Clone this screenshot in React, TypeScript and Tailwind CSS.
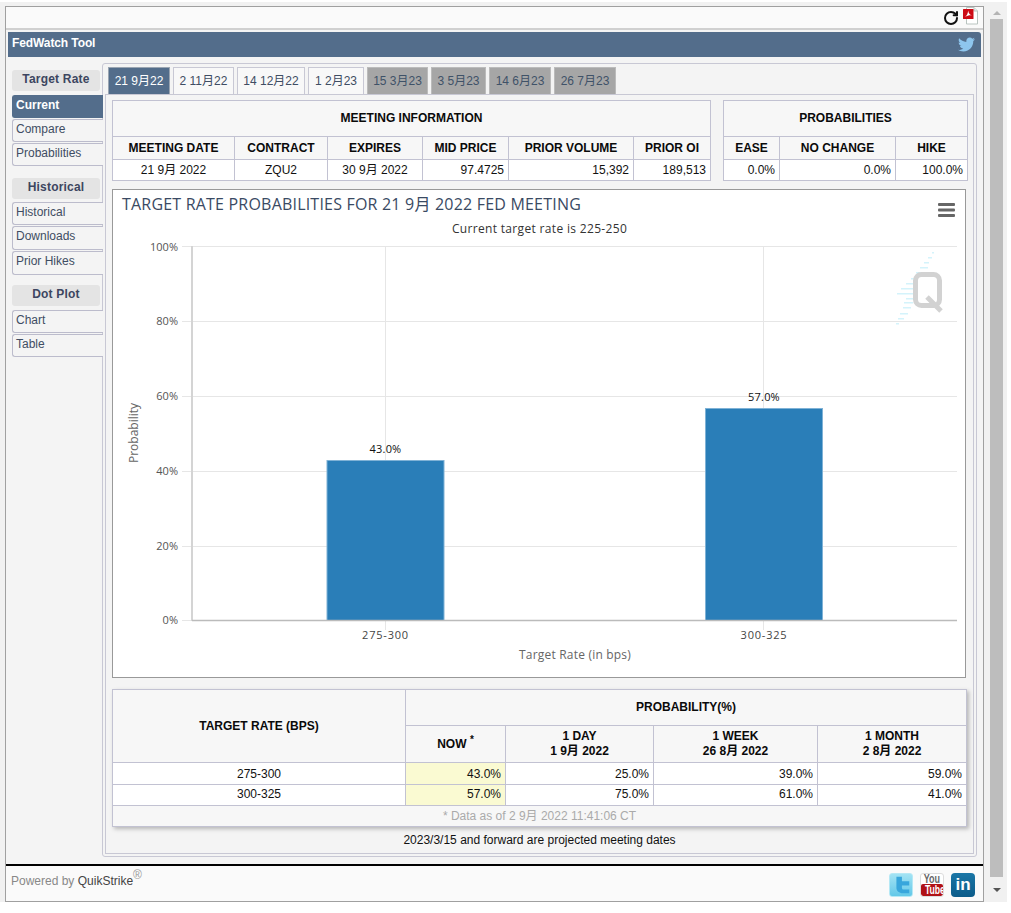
import { RotateCw } from 'lucide-react';
import { FaTwitter } from 'react-icons/fa';
import type { ReactNode } from 'react';

const tabs = [
  { label: '21 9月22', kind: 'active', width: 'w-[62px]' },
  { label: '2 11月22', kind: 'normal', width: 'w-[61px]' },
  { label: '14 12月22', kind: 'normal', width: 'w-[68px]' },
  { label: '1 2月23', kind: 'normal', width: 'w-[56px]' },
  { label: '15 3月23', kind: 'off', width: 'w-[61px]' },
  { label: '3 5月23', kind: 'off', width: 'w-[55px]' },
  { label: '14 6月23', kind: 'off', width: 'w-[62px]' },
  { label: '26 7月23', kind: 'off', width: 'w-[62px]' },
];

const th = 'border border-[#c2c2d2] bg-[#f7f7f7] font-bold text-[12px] text-[#0a0a0a] text-center p-0';
const tdC = 'border border-[#c2c2d2] bg-white text-[12px] text-[#111] text-center p-0';
const tdR = 'border border-[#c2c2d2] bg-white text-[12px] text-[#111] text-right pr-[4px] p-0';

function SideHead({ children, className }: { children: ReactNode; className?: string }) {
  return (
    <div className={`w-[88px] h-[21px] rounded-[3px] bg-[#e4e4e4] text-center text-[12px] font-bold leading-[19px] tracking-[0.2px] text-[#3d4660] ${className ?? ''}`}>
      {children}
    </div>
  );
}

function SideItem({ children, active, tall }: { children: ReactNode; active?: boolean; tall?: boolean }) {
  return (
    <div
      className={`relative z-10 w-[91px] ${tall ? 'h-[24px]' : 'h-[23px]'} rounded-l-[3px] border border-r-0 pl-[3px] text-[12px] leading-[18px] ${
        active ? 'border-[#536d8b] bg-[#536d8b] font-bold text-white' : 'border-[#bcbccc] bg-[#f4f4f4] text-[#3f4d63]'
      }`}
    >
      {children}
    </div>
  );
}

function Sidebar() {
  return (
    <div className="w-[90px] shrink-0 pt-[13px] ml-[6px]">
      <SideHead>Target Rate</SideHead>
      <div className="mt-[4px] flex flex-col gap-px">
        <SideItem active>Current</SideItem>
        <SideItem>Compare</SideItem>
        <SideItem>Probabilities</SideItem>
      </div>
      <SideHead className="mt-[12px]">Historical</SideHead>
      <div className="mt-[3px] flex flex-col gap-px">
        <SideItem>Historical</SideItem>
        <SideItem tall>Downloads</SideItem>
        <SideItem tall>Prior Hikes</SideItem>
      </div>
      <SideHead className="mt-[10px]">Dot Plot</SideHead>
      <div className="mt-[4px] flex flex-col gap-px">
        <SideItem>Chart</SideItem>
        <SideItem>Table</SideItem>
      </div>
    </div>
  );
}

function MeetingTables() {
  return (
    <div className="flex gap-[12px]">
      <table className="w-[598px] table-fixed border-collapse">
        <colgroup>
          <col className="w-[122px]" />
          <col className="w-[93px]" />
          <col className="w-[95px]" />
          <col className="w-[86px]" />
          <col className="w-[125px]" />
          <col className="w-[77px]" />
        </colgroup>
        <tbody>
          <tr className="h-[36px]">
            <th colSpan={6} className={`${th} pb-[2px]`}>MEETING INFORMATION</th>
          </tr>
          <tr className="h-[23px]">
            <th className={th}>MEETING DATE</th>
            <th className={th}>CONTRACT</th>
            <th className={th}>EXPIRES</th>
            <th className={th}>MID PRICE</th>
            <th className={th}>PRIOR VOLUME</th>
            <th className={th}>PRIOR OI</th>
          </tr>
          <tr className="h-[21px]">
            <td className={tdC}>21 9月 2022</td>
            <td className={tdC}>ZQU2</td>
            <td className={tdC}>30 9月 2022</td>
            <td className={tdR}>97.4725</td>
            <td className={tdR}>15,392</td>
            <td className={tdR}>189,513</td>
          </tr>
        </tbody>
      </table>
      <table className="w-[244px] table-fixed border-collapse">
        <colgroup>
          <col className="w-[56px]" />
          <col className="w-[116px]" />
          <col className="w-[72px]" />
        </colgroup>
        <tbody>
          <tr className="h-[36px]">
            <th colSpan={3} className={`${th} pb-[2px]`}>PROBABILITIES</th>
          </tr>
          <tr className="h-[23px]">
            <th className={th}>EASE</th>
            <th className={th}>NO CHANGE</th>
            <th className={th}>HIKE</th>
          </tr>
          <tr className="h-[21px]">
            <td className={tdR}>0.0%</td>
            <td className={tdR}>0.0%</td>
            <td className={tdR}>100.0%</td>
          </tr>
        </tbody>
      </table>
    </div>
  );
}

const gridY = [
  { y: 246.5, label: '100%', dy: 4 },
  { y: 321.5, label: '80%', dy: 3 },
  { y: 396.5, label: '60%', dy: 3 },
  { y: 471.5, label: '40%', dy: 3 },
  { y: 546.5, label: '20%', dy: 3 },
  { y: 620.5, label: '0%', dy: 3 },
];

const stripes = [
  [932, 252, 2], [928, 257, 4], [924, 262, 5], [920, 267, 8], [916, 272, 8], [911, 278, 6], [906, 283, 9], [901, 288, 12],
  [897, 293, 17], [906, 298, 9], [904, 302, 9], [903, 307, 8], [900, 313, 8], [898, 318, 6], [896, 323, 3],
];

// chart drawn in page coordinates, shifted back by the card's origin
function Chart() {
  const font = "'Open Sans', 'Noto Sans CJK SC', sans-serif";
  return (
    <div className="mt-[8px] w-[854px] h-[489px] border border-[#999] bg-white">
      <svg width="852" height="487" viewBox="113 190 852 487" fontFamily={font}>
        <text x="122" y="210" fontSize="16" fill="#3a4a63" letterSpacing="0.2">
          TARGET RATE PROBABILITIES FOR 21 9月 2022 FED MEETING
        </text>
        <text x="539.500" y="233" fontSize="12" fill="#333" textAnchor="middle" letterSpacing="0.33">
          Current target rate is 225-250
        </text>
        <g fill="#666">
          <rect x="938" y="203" width="17" height="3" rx="1" />
          <rect x="938" y="208.500" width="17" height="3" rx="1" />
          <rect x="938" y="214" width="17" height="3" rx="1" />
        </g>

        {gridY.map(g => (
          <g key={g.label}>
            <line x1="182" x2="957" y1={g.y} y2={g.y} stroke="#e6e6e6" />
            <text x="178" y={g.y + g.dy} fontSize="11" fill="#555" textAnchor="end">{g.label}</text>
          </g>
        ))}
        <line x1="385.500" x2="385.500" y1="246" y2="630" stroke="#e6e6e6" />
        <line x1="763.500" x2="763.500" y1="246" y2="630" stroke="#e6e6e6" />

        {stripes.map(([x, y, w]) => (
          <rect key={y} x={x} y={y} width={w} height="1.5" fill="#d4f3fb" />
        ))}
        <rect x="915.500" y="274.500" width="24" height="31" rx="6" fill="#fff" fillOpacity="0.6" stroke="#d2d2d2" strokeWidth="5" />
        <line x1="927" y1="297" x2="941" y2="311" stroke="#d2d2d2" strokeWidth="5" />

        <rect x="191" y="246" width="2" height="375" fill="#d4d4d4" />
        <rect x="327" y="460.500" width="117" height="160" fill="#2a7eb8" stroke="#7fb2d6" />
        <rect x="705.500" y="408.500" width="117" height="212" fill="#2a7eb8" stroke="#7fb2d6" />
        <line x1="192" x2="957" y1="620.500" y2="620.500" stroke="#bbb" strokeWidth="1.500" />

        <text x="385.500" y="453" fontSize="11" fill="#111" textAnchor="middle" letterSpacing="0.2">43.0%</text>
        <text x="764" y="401" fontSize="11" fill="#111" textAnchor="middle" letterSpacing="0.2">57.0%</text>
        <text x="385.500" y="639" fontSize="11" fill="#444" textAnchor="middle" letterSpacing="0.8">275-300</text>
        <text x="764" y="639" fontSize="11" fill="#444" textAnchor="middle" letterSpacing="0.8">300-325</text>
        <text x="575" y="659" fontSize="12" fill="#666" textAnchor="middle" letterSpacing="0.2">Target Rate (in bps)</text>
        <text x="0" y="0" fontSize="12" fill="#666" textAnchor="middle" transform="translate(138 433) rotate(-90)">Probability</text>
      </svg>
    </div>
  );
}

function RateTable() {
  const headerLine = 'leading-[15px]';
  return (
    <table className="mt-[11px] w-[854px] table-fixed border-collapse shadow-[2px_2px_4px_rgba(0,0,0,0.25)]">
      <colgroup>
        <col className="w-[293px]" />
        <col className="w-[100px]" />
        <col className="w-[148px]" />
        <col className="w-[164px]" />
        <col className="w-[149px]" />
      </colgroup>
      <tbody>
        <tr className="h-[36px]">
          <th rowSpan={2} className={th}>TARGET RATE (BPS)</th>
          <th colSpan={4} className={`${th} pb-[2px]`}>PROBABILITY(%)</th>
        </tr>
        <tr className="h-[37px]">
          <th className={th}>NOW <sup className="text-[10px]">*</sup></th>
          <th className={`${th} ${headerLine}`}>1 DAY<br />1 9月 2022</th>
          <th className={`${th} ${headerLine}`}>1 WEEK<br />26 8月 2022</th>
          <th className={`${th} ${headerLine}`}>1 MONTH<br />2 8月 2022</th>
        </tr>
        <tr className="h-[22px]">
          <td className={tdC}>275-300</td>
          <td className={`${tdR} !bg-[#fafad2]`}>43.0%</td>
          <td className={tdR}>25.0%</td>
          <td className={tdR}>39.0%</td>
          <td className={tdR}>59.0%</td>
        </tr>
        <tr className="h-[21px]">
          <td className={`${tdC} pb-[2px]`}>300-325</td>
          <td className={`${tdR} pb-[2px] !bg-[#fafad2]`}>57.0%</td>
          <td className={`${tdR} pb-[2px]`}>75.0%</td>
          <td className={`${tdR} pb-[2px]`}>61.0%</td>
          <td className={`${tdR} pb-[2px]`}>41.0%</td>
        </tr>
        <tr className="h-[21px]">
          <td colSpan={5} className="border border-[#c2c2d2] bg-[#f7f7f7] text-center text-[12px] text-[#aaa] p-0">
            * Data as of 2 9月 2022 11:41:06 CT
          </td>
        </tr>
      </tbody>
    </table>
  );
}

function TabPanel() {
  return (
    <div className="mt-[6px] w-[875px] h-[794px] rounded-[3px] border border-[#c8c8d4] pl-[2px] pr-[2px] pt-[3px]">
      <div className="flex gap-[3px] pl-[3px] h-[27px]">
        {tabs.map(t => (
          <div
            key={t.label}
            className={`${t.width} h-[27px] border text-center text-[12px] leading-[26px] ${
              t.kind === 'active'
                ? 'border-[#9aa5b2] border-b-0 bg-[#536d8b] text-white'
                : t.kind === 'off'
                  ? 'border-[#bbb] border-b-0 bg-[#a6a6a6] text-[#3f5268]'
                  : 'border-[#c8c8d4] border-b-0 bg-[#f8f8f8] text-[#3f4d63]'
            }`}
          >
            {t.label}
          </div>
        ))}
      </div>
      <div className="w-[869px] h-[760px] border border-[#c8c8d4] pl-[6px] pt-[5px]">
        <MeetingTables />
        <Chart />
        <RateTable />
        <div className="mt-[6px] pr-[6px] text-center text-[12px] leading-[14px] text-[#111]">
          2023/3/15 and forward are projected meeting dates
        </div>
      </div>
    </div>
  );
}

function PdfIcon() {
  return (
    <svg width="16" height="18" viewBox="0 0 16 18" className="-mt-[3px]">
      <path d="M3.500 .5H11L14.500 4V17H3.500Z" fill="#fff" stroke="#b9c4c0" />
      <path d="M11 .5V4H14.500" fill="#e6efe9" stroke="#b9c4c0" />
      <rect x="0" y="2" width="10.500" height="10" rx="0.5" fill="#cc0a14" />
      <path d="M2 10C4 8.500 5 6 5.200 3.500C5.500 6 6.400 7.700 9 8.300C6.500 8 4 8.700 2 10Z" fill="#fff" />
    </svg>
  );
}

function FooterIcons() {
  return (
    <div className="flex gap-[7px]">
      <div className="w-[24px] h-[24px] rounded-[3px] border border-[#b5e8f5] bg-gradient-to-b from-[#a2e3f4] to-[#62c8e8] overflow-hidden">
        <svg width="22" height="22" viewBox="0 0 24 24">
          <path d="M7 3h6v5h8v4.500h-8v2.500c0 1.500.8 2 2 2h6v4h-7c-4 0-7-2.500-7-6Z" fill="#38a6dc" />
        </svg>
      </div>
      <div className="w-[24px] h-[24px] rounded-[3px] border border-[#ddd] bg-white overflow-hidden flex flex-col items-center">
        <div className="h-[10px] text-[12px] leading-[11px] font-bold text-[#666] scale-x-[0.75]">You</div>
        <div className="w-full flex-1 rounded-[2px] bg-[#b01116] text-center text-[12px] leading-[12px] font-bold text-white">
          <span className="inline-block scale-x-[0.72]">Tube</span>
        </div>
      </div>
      <div className="w-[24px] h-[24px] rounded-[4px] bg-gradient-to-b from-[#1a76a6] to-[#0c5c8a] text-center text-[17px] leading-[24px] font-bold text-white">
        in
      </div>
    </div>
  );
}

function Scrollbar() {
  return (
    <div className="ml-[5px] w-[15px] h-[896px] flex flex-col items-center">
      <div className="h-[13px] flex items-center justify-center">
        <div className="w-0 h-0 border-x-[4px] border-x-transparent border-b-[4px] border-b-[#b4b4b4]" />
      </div>
      <div className="w-[13px] h-[858px] bg-[#bdbdbd]" />
      <div className="h-[25px] flex items-center justify-center">
        <div className="w-0 h-0 border-x-[4px] border-x-transparent border-t-[4px] border-t-[#555]" />
      </div>
    </div>
  );
}

export default function App() {
  return (
    <div className="w-[1011px] h-[913px] bg-white pt-[2px] font-['Liberation_Sans','Noto_Sans_CJK_SC',sans-serif]">
      <div className="flex w-[1007px] h-[900px] bg-[#f1f1f1] pl-[5px] pt-[4px]">
        <div className="flex flex-col w-[979px] h-[896px] border border-[#a0a0a0] bg-[#f4f4f4]">
          <div className="flex h-[23px] shrink-0 items-center justify-end gap-[4px] border-b-2 border-[#d0d0d0] bg-[#fafafa] pr-[4px]">
            <RotateCw size={16} strokeWidth={3} color="#111" />
            <PdfIcon />
          </div>
          <div className="ml-[2px] mt-[2px] flex h-[25px] w-[973px] shrink-0 items-center justify-between rounded-tr-[3px] bg-[#536d8b] pb-[3px] pl-[4px] pr-[6px] text-[12px] font-bold tracking-[-0.1px] text-white">
            FedWatch Tool
            <FaTwitter size={17} color="#8ec6ee" className="mt-[2px]" />
          </div>
          <div className="flex h-[800px] shrink-0">
            <Sidebar />
            <TabPanel />
          </div>
          <div className="mt-[7px] flex-1 border-t-2 border-black bg-[#fafafa] flex justify-between pl-[5px] pr-[8px] pt-[7px]">
            <div className="pt-px text-[12px] leading-[15px] text-[#888]">
              Powered by <span className="text-[#444]">QuikStrike</span>
              <sup className="text-[12px] text-[#999]">®</sup>
            </div>
            <FooterIcons />
          </div>
        </div>
        <Scrollbar />
      </div>
    </div>
  );
}
